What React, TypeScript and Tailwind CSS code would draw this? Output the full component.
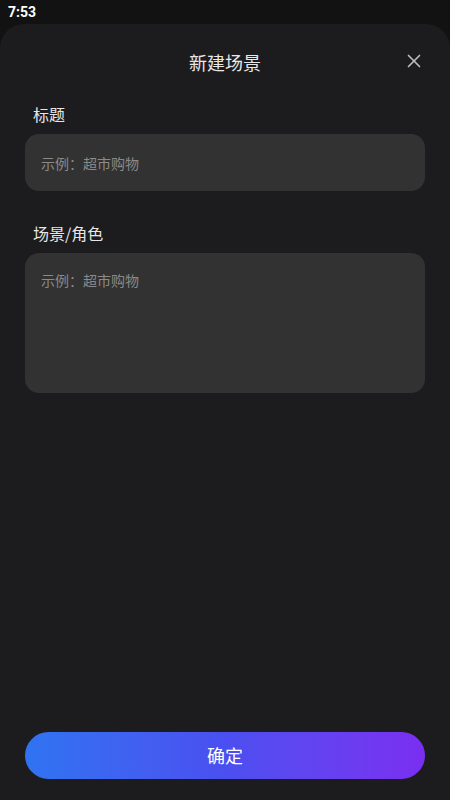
import { X } from "lucide-react"

const font = { fontFamily: '"Noto Sans CJK SC", "Noto Sans", sans-serif' }

function Field({ label, tall }: { label: string; tall?: boolean }) {
  return (
    <div className="flex flex-col">
      <label className="px-[8px] text-[16px] leading-[24px] text-[#e6e6e6]">{label}</label>
      <div
        className={
          tall
            ? "mt-[8px] h-[140px] rounded-[14px] bg-[#323232] px-[16px] pt-[14px]"
            : "mt-[8px] flex h-[57px] items-center rounded-[14px] bg-[#323232] px-[16px]"
        }
      >
        <span className="text-[14px] leading-[22px] text-[#8a8a8a]">示例：超市购物</span>
      </div>
    </div>
  )
}

export default function App() {
  return (
    <div className="flex h-[800px] w-[450px] flex-col bg-[#121213]" style={font}>
      <div className="flex h-[24px] items-center px-[8px]">
        <span className="text-[14px] font-bold text-white" style={{ fontFamily: '"Roboto", sans-serif' }}>
          7:53
        </span>
      </div>
      <div className="flex flex-1 flex-col rounded-t-[24px] bg-[#1c1c1e] px-[25px]">
        <div className="relative flex h-[74px] items-center justify-center pt-[2px]">
          <h1 className="text-[18px] font-normal text-[#e8e8e8]">新建场景</h1>
          <X className="absolute right-[0px] top-[26px] h-[22px] w-[22px] text-[#bdbdbd]" strokeWidth={1.8} />
        </div>
        <div className="mt-[4px] flex flex-col gap-[30px]">
          <Field label="标题" />
          <Field label="场景/角色" tall />
        </div>
        <div className="flex-1" />
        <button className="mb-[21px] h-[47px] w-full rounded-full bg-gradient-to-r from-[#2f73f2] via-[#4a4ff0] to-[#7a2ef0] text-[18px] text-white">
          确定
        </button>
      </div>
    </div>
  )
}
